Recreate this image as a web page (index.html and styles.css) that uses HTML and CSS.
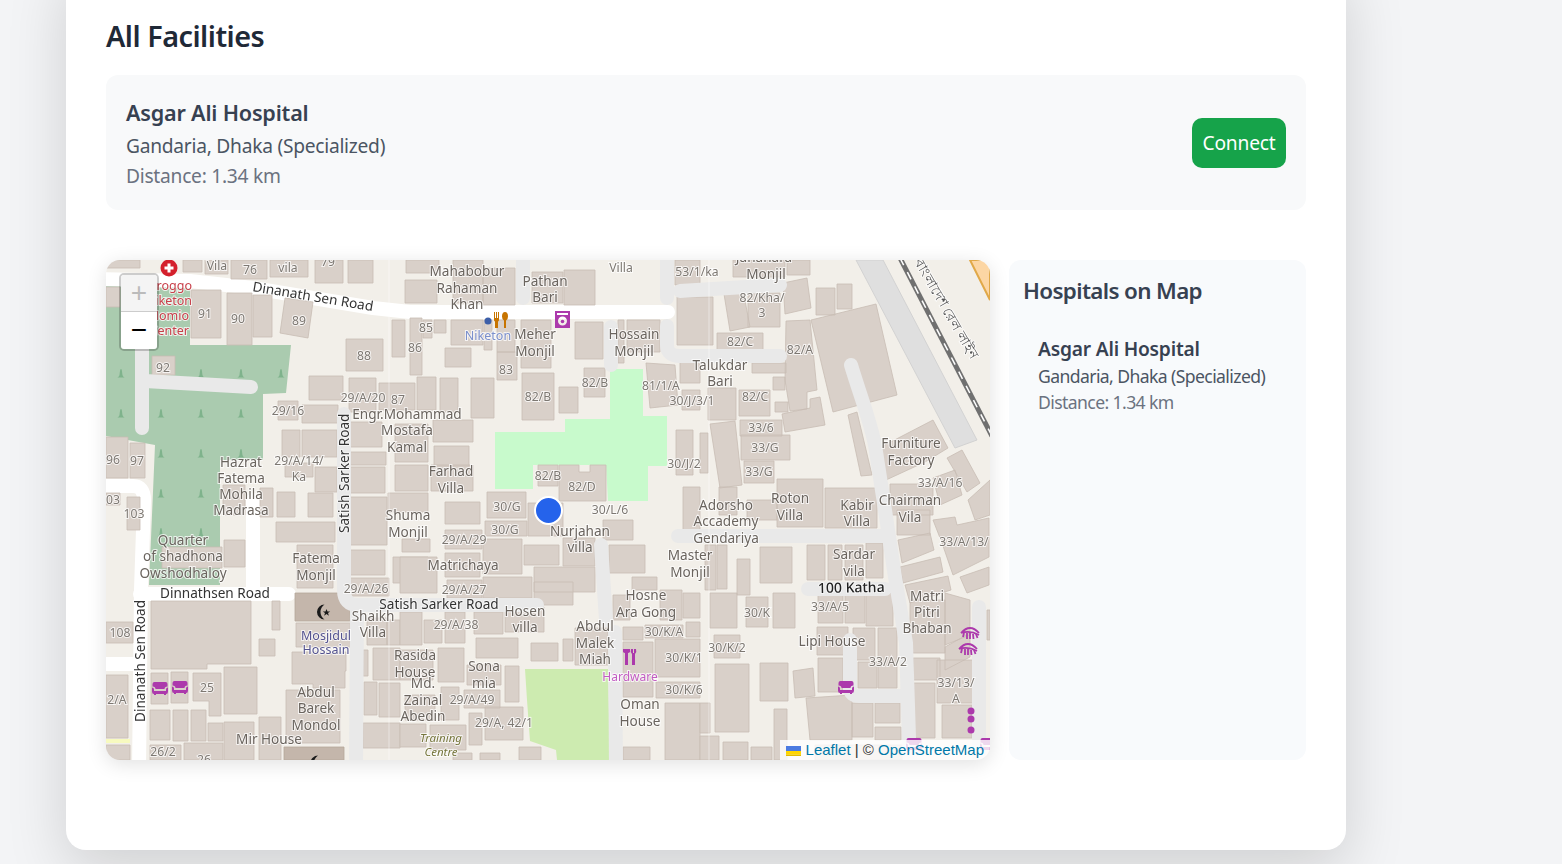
FILE: index.html
```html
<!DOCTYPE html>
<html lang="en">
<head>
  <meta charset="UTF-8" />
  <meta name="viewport" content="width=device-width, initial-scale=1" />
  <title>All Facilities</title>
  <link rel="stylesheet" href="styles.css">
</head>
<body>

  <main class="panel">
    <h2 class="panel-title">All Facilities</h2>

    <section class="facility">
      <div>
        <h3>Asgar Ali Hospital</h3>
        <p class="facility-area">Gandaria, Dhaka (Specialized)</p>
        <p class="facility-dist">Distance: 1.34 km</p>
      </div>
      <button class="connect" type="button">Connect</button>
    </section>

    <section class="map-row">
      <div class="map">
        <svg class="map-tiles" viewBox="106 260 884 500" aria-label="Street map">
          <defs>
            <path id="tree" d="M0 -6c1 0 1 3 1.500 6c.3 1.500 1.500 2 2 2.500h-7c.5 -.5 1.700 -1 2 -2.500c.5 -3 .5 -6 1.500 -6z" />
            <path id="sofa" d="M-5.500 -6h11q2 0 2 2v2.500q-3 0 -3 2.500h-9q0 -2.500 -3 -2.500v-2.500q0 -2 2 -2zM-8 -.500q2 0 2 2v1.500h12v-1.500q0 -2 2 -2v4q0 2.500 -2 2.500v1h-2v-1h-8v1h-2v-1q-2 0 -2 -2.500z" />
            <path id="crescent" d="M3 -7.500a7.500 7.500 0 1 0 0 15a9 9 0 0 1 0 -15zM5 -3l1 2.500h2.700l-2.200 1.600l.9 2.700l-2.400 -1.700l-2.400 1.700l.9 -2.700l-2.200 -1.600h2.700z" />
            <g id="lash">
              <path d="M-9 1Q0 -9 9 1M-9 1Q0 -2 9 3" class="lash-line" />
              <path d="M-6 1l-1 4M-3 1v6M0 1v6M3 2l.5 5M6 2l1.500 4" class="lash-line" />
            </g>
          </defs>

          <rect class="land" x="106" y="260" width="884" height="500" />

          <!-- landuse -->
          <path class="cemetery" d="M106 285H190V345H291L286 393 263 394V460H220V585H149L155 445 106 436Z" />
          <path class="pitch" d="M495 432H565V419H610V369H643V416H667V466H648V501H608L606 465H533V489H495Z" />
          <path class="grass" d="M525 669H608L610 760H557L556 750 530 741 527 700Z" />
          <path class="rail-yard" d="M856 260H883L977 440 955 448Z" />
          <path class="commercial" d="M970 260H990V300Z" />

          <!-- trees -->
          <g class="trees">
            <use href="#tree" x="121" y="375" /><use href="#tree" x="201" y="375" /><use href="#tree" x="241" y="375" /><use href="#tree" x="281" y="375" />
            <use href="#tree" x="121" y="415" /><use href="#tree" x="161" y="415" /><use href="#tree" x="201" y="415" /><use href="#tree" x="241" y="415" />
            <use href="#tree" x="161" y="455" /><use href="#tree" x="201" y="455" /><use href="#tree" x="241" y="455" />
            <use href="#tree" x="161" y="495" /><use href="#tree" x="201" y="495" />
            <use href="#tree" x="161" y="534" /><use href="#tree" x="201" y="534" />
          </g>

          <!-- white roads -->
          <g class="road-main">
            <path d="M100 279L190 281 253 288 373 308 410 312 668 312" />
            <path d="M100 486H133Q144 486 144 500L141 590 139 770M100 664H139M140 594H289M253 500V590" />
          </g>
          <path class="road-yellow" d="M106 741H130" />

          <!-- buildings, west -->
          <path class="bld" d="M107 260H140V268H107Z M183 260H202V272H183Z M205 260H228V274H205Z M231 260H267V279H231Z M270 260H308V277H270Z M315 260H343V283H315Z M348 260H373V283H348Z
            M106 287H120V307H106Z M191 290H221V338H191Z M227 293H252V345H227Z M253 295H272V337H253Z M285 298L313 302 308 338 280 333Z M346 339H383V371H346Z M392 320H405V357H392Z
            M152 356H175V375H152Z M309 376H343V400H309Z M349 378H376V412H349Z M379 383H415V410H379Z M278 401H298V420H278Z M302 405H338V423H302Z M282 430H300V457H282Z M302 430H337V457H302Z
            M350 422H382V447H350Z M350 452H386V465H350Z M350 467H385V493H350Z M285 463H313V477H285Z M315 467H337V492H315Z M308 493H333V517H308Z M350 497H387V545H350Z M106 437H128V478H106Z M130 443H145V478H130Z
            M106 493H120V505H106Z M127 497H140V530H127Z M223 485H245V515H223Z M260 488H273V517H260Z M277 492H295V517H277Z M162 547H222V568H162Z M224 540H245V567H224Z M276 522H335V542H276Z
            M297 545H333V588H297Z M350 550H385V575H350Z M350 578H389V596H350Z M393 557H428V583H393Z M151 601H251V664H207V669H151Z M272 601H280V630H272Z M259 639H275V656H259Z M296 623H350V647H296Z
            M292 652H346V671H345V688H313V684H292Z M286 690H340V743H286Z M259 717H281V760H259Z M224 722H254V760H224Z M224 667H257V714H224Z M193 673H221V716H209V701H193Z M151 673H168V704H151Z M171 672H188V703H171Z
            M150 710H170V740H150Z M173 710H188V741H173Z M191 710H206V741H191Z M208 723H223V741H208Z M150 745H181V760H150Z M184 743H223V760H184Z M106 622H133V643H106Z M106 675H128V738H106Z M106 745H130V760H106Z
            M363 650H368V676H363Z M373 648H400V680H373Z M364 682H377V715H364Z M379 683H400V717H379Z M363 723H400V748H363Z M367 618H387V645H367Z M387 620H400V645H387Z" />

          <!-- buildings, centre -->
          <path class="bld" d="M406 260H439V273H406Z M405 280H437V303H405Z M453 260H483V303H453Z M483 268H515V305H483Z M532 272H563V303H532Z M564 270H595V305H564Z
            M410 318H422V375H410Z M423 320H432V338H423Z M434 320H446V333H434Z M451 320H483V345H451Z M484 320H492V350H484Z M445 348H471V367H445Z M497 320H515V352H497Z M497 352H517V380H497Z
            M521 320H551V368H521Z M575 322H603V359H575Z M627 320H660V352H627Z M618 320H624V363H618Z M584 368H605V397H584Z M522 373H554V420H522Z M559 387H578V413H559Z M471 378H494V418H471Z M440 378H458V412H440Z
            M417 377H436V410H417Z M433 420H473V442H433Z M434 446H469V466H434Z M395 424H428V462H395Z M395 465H428V491H395Z M431 465H473V491H431Z M388 493H428V512H388Z M445 502H480V524H445Z M487 492H526V518H487Z
            M538 465H558V486H538Z M559 465H579V472H590V465H606V501H559Z M646 363L675 365 678 405 650 408Z M680 361H700V383H680Z M682 390H700V410H682Z M676 430H693V475H676Z M683 487H700V530H683Z
            M675 260H700V285H675Z M677 297H713V345H677Z M485 521H527V536H485Z M528 503H563V536H528Z M445 530H482V549H445Z M402 539H430V552H402Z M445 553H480V577H445Z M483 539H522V574H483Z M524 545H559V565H524Z
            M563 538H595V566H563Z M603 520H633V540H603Z M609 545H645V573H609Z M400 557H437V593H400Z M447 580H482V598H447Z M483 577H532V598H483Z M534 567H595V592H534Z M534 582H573V605H534Z M632 577H657V590H632Z
            M613 595H630V620H613Z M660 590H682V620H660Z M683 593H700V618H683Z M623 627H643V640H623Z M645 625H683V638H645Z M686 622H700V637H686Z M623 642H653V697H623Z M655 639H700V677H655Z M656 682H700V698H656Z
            M665 703H700V760H665Z M623 747H650V760H623Z M575 628H608V665H575Z M563 639H573V661H563Z M531 643H558V661H531Z M476 638H518V658H476Z M474 612H503V634H474Z M445 612H465V643H445Z M424 620H442V643H424Z
            M400 612H422V645H400Z M505 607H544V632H505Z M438 648H464V682H438Z M400 650H433V680H400Z M467 665H501V685H467Z M505 666H519V702H505Z M441 687H459V720H441Z M464 690H500V708H464Z M485 707H523V740H485Z
            M469 713H482V745H469Z M405 695H435V720H405Z M400 724H426V747H400Z M430 725H466V750H430Z M519 747H541V760H519Z M480 753H500V760H480Z M453 753H472V760H453Z" />

          <!-- buildings, east -->
          <path class="bld" d="M733 260H785V277H733Z M787 260H810V275H787Z M724 294L743 290 750 327 730 331Z M748 293H780V327H748Z M783 283L807 278 811 308 785 314Z M816 288H835V315H816Z M837 284H852V309H837Z
            M811 320L876 304 897 395 833 412Z M786 321L810 320 817 390 807 392V409L790 411 785 380Z M773 377H785V390H773Z M775 402H788V412H775Z M782 414L810 408V399L820 397 825 425 785 432Z
            M717 333H763V352H717Z M752 363H786V373H752Z M708 388H736V420H708Z M739 390H770V416H739Z M740 420H782V436H740Z M741 435H790V460H741Z M744 461H774V483H744Z M710 424L735 421 742 485 720 488Z
            M719 487H737V515H719Z M700 433H708V473H700Z M747 500H777V520H747Z M777 479H823V527H777Z M825 488H877V528H825Z M890 484H933V515H890Z M881 447L933 420 948 448 925 462 886 480Z
            M848 415L857 412 872 475 861 476Z M947 458L962 450 980 483 967 492Z M968 500L990 480V515L975 520Z M933 478L955 470 962 495 940 505Z M897 510H930V535H897Z M898 540L930 533 934 550 902 563Z M900 567L940 557 943 572 903 583Z
            M905 585L948 576 951 590 910 603Z M933 520L955 517 957 525 989 518V557L953 575 942 543Z M960 577L989 567V585L967 593Z M945 593L970 600V635L945 645Z M910 600H945V653H910Z M945 647L970 633V657L945 670Z
            M913 658H940V680H913Z M937 660H973V703H937Z M913 683H935V738H913Z M942 705H972V738H942Z M705 545H716V590H705Z M717 545H727V589H717Z M737 559H750V595H737Z M760 547H792V583H760Z M710 593H737V628H710Z
            M746 597H768V627H746Z M773 593H795V628H773Z M807 545H825V580H807Z M828 545H842V580H828Z M845 545H863V580H845Z M866 543H883V578H866Z M818 595H843V623H818Z M845 595H865V623H845Z M866 593H893V626H866Z
            M817 627H848V655H817Z M853 628H875V660H853Z M878 628H897V688H878Z M858 662H877V688H858Z M818 658H843V692H818Z M714 635H740V658H714Z M715 664H749V732H715Z M760 663H788V701H760Z M793 671L813 668 815 696 795 698Z
            M806 698L852 695V740H810Z M852 703H873V737H852Z M875 703H900V723H875Z M875 727H901V740H875Z M774 709H787V760H774Z M700 736H719V760H700Z M723 742H748V760H723Z M751 747H772V760H751Z M700 703H710V733H700Z M987 610H990V640H987Z M815 745H905V760H815Z" />

          <path class="bld-dark" d="M295 593H350V621H295Z M284 747H344V760H284Z" />

          <!-- grey service roads -->
          <g class="road-minor">
            <path d="M142 290V428M145 381L251 387" />
            <path d="M344 414V590Q344 605 358 605H537M357 605L356 770" />
            <path d="M523 250V298M611 327V365M667 250V298M667 326V345Q667 356 680 356H780M680 291L780 285" />
            <path d="M601 545L606 620M615 632L616 770" />
            <path d="M678 536H885M808 589H885M850 640V688Q850 696 860 696H900M979 607V770" />
            <path d="M851 365C860 395 870 420 875 445L885 510 895 577 906 643 910 770" />
          </g>

          <!-- railway -->
          <path class="rail" d="M900 258L992 436" />
          <path class="rail-dash" d="M900 258L992 436" />
          <path class="tile-seam" d="M389 260V760M709 260V760" />

          <!-- point icons -->
          <circle class="ico-hospital" cx="169" cy="268" r="8.500" />
          <path class="ico-plus" d="M167.500 263.500h3v3h3v3h-3v3h-3v-3h-3v-3h3z" />
          <circle class="ico-blue" cx="488" cy="321" r="3.500" />
          <path class="ico-food" d="M494 312h1v6h1v-6h1v6h1v-6h1v8q0 1 -1 1.500v6.500h-3v-6.500q-1 -.5 -1 -1.500zM505 312q3 0 3 4.500q0 3 -2 4v7.500h-2v-7.500q-2 -1 -2 -4q0 -4.500 3 -4.500z" />
          <path class="ico-purple" fill-rule="evenodd" d="M555 311h15v17h-15zM557 313v2h11v-2zM562.500 316.500a4.500 4.500 0 1 0 0 9a4.500 4.500 0 1 0 0 -9z" />
          <circle class="ico-washer" cx="562.500" cy="321.500" r="1.800" />
          <path class="ico-magenta" d="M623 649h7v3q-1 1 -2 1v12h-3v-12q-1 0 -2 -1zM631 649h2v4h1v-4h2q1 3 -1 5v11h-3v-11q-2 -2 -1 -5z" />
          <g class="ico-purple">
            <use href="#sofa" x="160" y="688" />
            <use href="#sofa" x="180" y="687" />
            <use href="#sofa" x="846" y="687" />
            <use href="#sofa" x="914" y="744" />
            <use href="#sofa" x="988" y="744" />
            <circle cx="971" cy="711" r="3.500" /><circle cx="971" cy="719" r="3.500" /><circle cx="971" cy="730" r="3.500" />
          </g>
          <use href="#lash" x="970" y="632" /><use href="#lash" x="968" y="648" />
          <g class="ico-black">
            <use href="#crescent" x="321.500" y="612" />
            <use href="#crescent" x="315" y="763" />
          </g>

          <!-- street names -->
          <g class="lbl-road">
            <text transform="translate(252 291) rotate(9.500)">Dinanath Sen Road</text>
            <text x="215" y="598" class="mid">Dinnathsen Road</text>
            <text x="439" y="609" class="mid">Satish Sarker Road</text>
            <text transform="translate(349 533) rotate(-90)">Satish Sarker Road</text>
            <text transform="translate(145 722) rotate(-90)">Dinanath Sen Road</text>
            <text transform="translate(818 593) rotate(-1)" class="lbl-katha">100 Katha</text>
          </g>

          <text class="lbl-rail" transform="translate(914 262) rotate(60)">বাংলাদেশ রেল লাইন</text>

          <!-- house numbers -->
          <g class="lbl-num">
            <text x="217" y="270">Vila</text><text x="250" y="274">76</text><text x="288" y="272">vila</text><text x="328" y="266">79</text>
            <text x="205" y="318">91</text><text x="238" y="323">90</text><text x="299" y="325">89</text><text x="163" y="372">92</text><text x="364" y="360">88</text>
            <text x="426" y="332">85</text><text x="415" y="352">86</text><text x="506" y="374">83</text><text x="595" y="387">82/B</text><text x="538" y="401">82/B</text>
            <text x="363" y="402">29/A/20</text><text x="398" y="404">87</text><text x="288" y="415">29/16</text><text x="113" y="464">96</text><text x="137" y="465">97</text>
            <text x="113" y="504">03</text><text x="134" y="518">103</text><text x="120" y="637">108</text><text x="207" y="692">25</text><text x="117" y="704">2/A</text><text x="163" y="756">26/2</text><text x="204" y="764">26</text>
            <text x="621" y="272">Villa</text><text x="697" y="276">53/1/ka</text><text x="762" y="302">82/Kha/</text><text x="762" y="317">3</text><text x="740" y="346">82/C</text><text x="800" y="354">82/A</text>
            <text x="661" y="390">81/1/A</text><text x="692" y="405">30/J/3/1</text><text x="755" y="401">82/C</text><text x="761" y="432">33/6</text><text x="765" y="452">33/G</text><text x="759" y="476">33/G</text>
            <text x="940" y="487">33/A/16</text><text x="299" y="465">29/A/14/</text><text x="299" y="481">Ka</text><text x="548" y="480">82/B</text><text x="582" y="491">82/D</text><text x="507" y="511">30/G</text>
            <text x="610" y="514">30/L/6</text><text x="684" y="468">30/J/2</text><text x="505" y="534">30/G</text><text x="464" y="544">29/A/29</text><text x="964" y="546">33/A/13/</text><text x="366" y="593">29/A/26</text>
            <text x="464" y="594">29/A/27</text><text x="830" y="611">33/A/5</text><text x="757" y="617">30/K</text><text x="456" y="629">29/A/38</text><text x="664" y="636">30/K/A</text><text x="684" y="662">30/K/1</text>
            <text x="727" y="652">30/K/2</text><text x="888" y="666">33/A/2</text><text x="472" y="704">29/A/49</text><text x="684" y="694">30/K/6</text><text x="504" y="727">29/A, 42/1</text><text x="956" y="687">33/13/</text><text x="956" y="703">A</text>
          </g>

          <!-- building names -->
          <g class="lbl">
            <text x="467" y="276">Mahabobur</text><text x="467" y="293">Rahaman</text><text x="467" y="309">Khan</text><text x="545" y="286">Pathan</text><text x="545" y="302">Bari</text>
            <text x="764" y="262">Jahanara</text><text x="766" y="279">Monjil</text><text x="535" y="339">Meher</text><text x="535" y="356">Monjil</text><text x="634" y="339">Hossain</text><text x="634" y="356">Monjil</text>
            <text x="720" y="370">Talukdar</text><text x="720" y="386">Bari</text><text x="911" y="448">Furniture</text><text x="911" y="465">Factory</text><text x="407" y="419">Engr.Mohammad</text><text x="407" y="435">Mostafa</text><text x="407" y="452">Kamal</text>
            <text x="241" y="467">Hazrat</text><text x="241" y="483">Fatema</text><text x="241" y="499">Mohila</text><text x="241" y="515">Madrasa</text><text x="451" y="476">Farhad</text><text x="451" y="493">Villa</text>
            <text x="726" y="510">Adorsho</text><text x="726" y="526">Accademy</text><text x="726" y="543">Gendariya</text><text x="790" y="503">Roton</text><text x="790" y="520">Villa</text><text x="857" y="510">Kabir</text><text x="857" y="526">Villa</text>
            <text x="910" y="505">Chairman</text><text x="910" y="522">Vila</text><text x="408" y="520">Shuma</text><text x="408" y="537">Monjil</text><text x="580" y="536">Nurjahan</text><text x="580" y="552">villa</text>
            <text x="183" y="545">Quarter</text><text x="183" y="561">of shadhona</text><text x="183" y="578">Owshodhaloy</text><text x="316" y="563">Fatema</text><text x="316" y="580">Monjil</text><text x="463" y="570">Matrichaya</text>
            <text x="690" y="560">Master</text><text x="690" y="577">Monjil</text><text x="854" y="559">Sardar</text><text x="854" y="576">vila</text><text x="525" y="616">Hosen</text><text x="525" y="632">villa</text>
            <text x="646" y="600">Hosne</text><text x="646" y="617">Ara Gong</text><text x="927" y="601">Matri</text><text x="927" y="617">Pitri</text><text x="927" y="633">Bhaban</text><text x="373" y="621">Shaikh</text><text x="373" y="637">Villa</text>
            <text x="595" y="631">Abdul</text><text x="595" y="648">Malek</text><text x="595" y="664">Miah</text><text x="832" y="646">Lipi House</text><text x="415" y="660">Rasida</text><text x="415" y="677">House</text><text x="423" y="688">Md.</text>
            <text x="423" y="705">Zainal</text><text x="423" y="721">Abedin</text><text x="484" y="671">Sona</text><text x="484" y="688">mia</text><text x="640" y="709">Oman</text><text x="640" y="726">House</text>
            <text x="316" y="697">Abdul</text><text x="316" y="713">Barek</text><text x="316" y="730">Mondol</text><text x="269" y="744">Mir House</text>
          </g>

          <g class="lbl-blue"><text x="488" y="340">Niketon</text></g>
          <g class="lbl-navy"><text x="326" y="640">Mosjidul</text><text x="326" y="654">Hossain</text></g>
          <g class="lbl-shop"><text x="630" y="681">Hardware</text></g>
          <g class="lbl-school"><text x="441" y="742">Training</text><text x="441" y="756">Centre</text></g>
          <g class="lbl-health"><text x="192" y="290">Aroggo</text><text x="192" y="305">Niketon</text><text x="189" y="320">Homio</text><text x="189" y="335">Center</text></g>
        </svg>

        <span class="map-pin"></span>

        <div class="zoom-ctl">
          <a class="zoom-btn zoom-off" href="#">+</a>
          <a class="zoom-btn" href="#">&minus;</a>
        </div>

        <div class="attrib">
          <svg class="attrib-flag" viewBox="0 0 12 8" aria-hidden="true"><path fill="#4c7be1" d="M0 0h12v4H0z" /><path fill="#ffd500" d="M0 4h12v3H0z" /><path fill="#e0bc00" d="M0 7h12v1H0z" /></svg>
          <a href="#">Leaflet</a> | &copy; <a href="#">OpenStreetMap</a>
        </div>
      </div>

      <aside class="map-side">
        <h3 class="side-title">Hospitals on Map</h3>
        <div class="side-item">
          <h4>Asgar Ali Hospital</h4>
          <p class="side-area">Gandaria, Dhaka (Specialized)</p>
          <p class="side-dist">Distance: 1.34 km</p>
        </div>
      </aside>
    </section>
  </main>

</body>
</html>
```
FILE: styles.css
```css
/* Reset & Base */
* { box-sizing: border-box; margin: 0; padding: 0; }
body {
  font-family: 'Noto Sans', 'Open Sans', sans-serif;
  background: #f3f4f6;
  color: #1f2937;
  height: 100vh;
  overflow: hidden;
}

/* Main panel (page is scrolled, so its top is off screen) */
.panel {
  width: 1280px;
  height: 890px;
  margin: -40px 0 0 66px;
  padding: 55px 40px 0;
  background: #fff;
  border-radius: 20px;
  box-shadow: 0 20px 60px rgba(0, 0, 0, 0.15);
}
.panel-title {
  font-size: 28.8px;
  font-weight: 600;
  line-height: 42px;
  letter-spacing: -0.5px;
  color: #1f2937;
  margin-bottom: 18px;
}

/* Facility row */
.facility {
  height: 135px;
  padding: 4px 20px 0;
  background: #f8f9fa;
  border-radius: 12px;
  display: flex;
  align-items: center;
  justify-content: space-between;
}
.facility h3 {
  font-size: 21.6px;
  font-weight: 600;
  line-height: 30px;
  letter-spacing: -0.2px;
  color: #374151;
  margin-bottom: 3px;
}
.facility-area, .facility-dist {
  font-size: 19.2px;
  line-height: 30px;
  letter-spacing: -0.26px;
}
.facility-area { color: #4b5563; }
.facility-dist { color: #6b7280; }
.connect {
  width: 94px;
  height: 50px;
  margin-top: -4px;
  border: none;
  border-radius: 10px;
  background: #16a34a;
  color: #fff;
  font-family: inherit;
  font-size: 19.2px;
  letter-spacing: -0.2px;
}

/* Map + side list */
.map-row {
  display: grid;
  grid-template-columns: 884px 297px;
  gap: 19px;
  height: 500px;
  margin-top: 50px;
}
.map {
  position: relative;
  overflow: hidden;
  border-radius: 14px;
  box-shadow: 0 4px 20px rgba(0, 0, 0, 0.12);
}
.map-tiles {
  display: block;
  width: 884px;
  height: 500px;
  filter: blur(0.45px);
  font-family: 'Noto Sans', sans-serif;
}

/* Map fills */
.land { fill: #f2efe9; }
.cemetery { fill: #aacbaf; }
.pitch { fill: #c8facc; }
.grass { fill: #cdebb0; }
.rail-yard { fill: #dfdfdf; stroke: #d2d2d2; }
.commercial { fill: #fcd6a4; stroke: #e0a848; stroke-width: 2; }
.trees { fill: #7fb38c; }
.bld { fill: #d9d0c9; stroke: #c8bdb4; stroke-width: 0.8; }
.bld-dark { fill: #c4b6ab; stroke: #b5a79a; stroke-width: 0.8; }
.road-minor path, .road-main path {
  fill: none;
  stroke-linecap: round;
  stroke-linejoin: round;
  stroke-width: 14px;
}
.road-minor path { stroke: #e9e9e9; }
.road-main path { stroke: #fff; }
.road-yellow { fill: none; stroke: #f7fabf; stroke-width: 4; }
.rail { fill: none; stroke: #707070; stroke-width: 5; }
.rail-dash { fill: none; stroke: #fff; stroke-width: 1.5; stroke-dasharray: 8 8; }
.tile-seam { stroke: #fff; stroke-opacity: 0.45; stroke-width: 1; }

/* Map icons */
.ico-hospital { fill: #d4202c; }
.ico-plus { fill: #fff; }
.ico-blue { fill: #3d5fa8; }
.ico-food { fill: #c77400; }
.ico-purple { fill: #ac39ac; }
.ico-washer { fill: #ac39ac; }
.ico-magenta { fill: #ac39ac; }
.ico-black { fill: #1a1a1a; }
.lash-line { fill: none; stroke: #ac39ac; stroke-width: 1.8; }

/* Map labels */
.lbl text, .lbl-num text, .lbl-blue text, .lbl-navy text, .lbl-shop text, .lbl-school text, .lbl-road text, .lbl-health text, .lbl-rail {
  paint-order: stroke;
  stroke: rgba(255, 255, 255, 0.75);
  stroke-width: 2px;
}
.lbl text { font-size: 13.6px; fill: #6a645e; text-anchor: middle; }
.lbl-num text { font-size: 12.2px; fill: #7d7872; text-anchor: middle; }
.lbl-road text { font-size: 13.6px; fill: #333; stroke: rgba(255, 255, 255, 0.6); }
.lbl-road text.mid { text-anchor: middle; }
.lbl-road text.lbl-katha { font-size: 14px; font-weight: 500; fill: #222; }
.lbl-rail { font-size: 13.5px; fill: #555; }
.lbl-blue text { font-size: 12.5px; fill: #7b90cc; text-anchor: middle; }
.lbl-navy text { font-size: 12.5px; fill: #53528f; text-anchor: middle; }
.lbl-shop text { font-size: 12px; fill: #c25cc2; text-anchor: middle; }
.lbl-school text { font-size: 11.5px; font-style: italic; fill: #76763c; text-anchor: middle; }
.lbl-health text { font-size: 12.5px; fill: #c8404a; text-anchor: end; }

/* Marker over map */
.map-pin {
  position: absolute;
  left: 428px;
  top: 236px;
  width: 29px;
  height: 29px;
  border-radius: 50%;
  background: #2563eb;
  border: 2.5px solid #fff;
}

/* Leaflet style controls */
.zoom-ctl {
  position: absolute;
  left: 13px;
  top: 13px;
  width: 40px;
  border: 2px solid rgba(0, 0, 0, 0.2);
  border-radius: 5px;
  background-clip: padding-box;
}
.zoom-btn {
  display: block;
  height: 37px;
  background: #fff;
  color: #000;
  text-align: center;
  text-decoration: none;
  font: 400 28px/36px 'Liberation Sans', Arial, sans-serif;
}
.zoom-btn:first-child { border-radius: 3px 3px 0 0; }
.zoom-btn:last-child { border-radius: 0 0 3px 3px; }
.zoom-off {
  background: #f4f4f4;
  color: #bbb;
  border-bottom: 1px solid #ccc;
}
.attrib {
  position: absolute;
  right: 0;
  bottom: 0;
  height: 20px;
  padding: 0 6px;
  background: rgba(255, 255, 255, 0.8);
  color: #333;
  font: 15px/20px 'Liberation Sans', Arial, sans-serif;
  white-space: nowrap;
}
.attrib a { color: #0078a8; text-decoration: none; }
.attrib-flag { width: 15px; height: 10px; vertical-align: -1px; }

/* Side list */
.map-side {
  background: #f8fafc;
  border-radius: 12px;
  padding: 14px 14px;
}
.side-title {
  font-size: 22.4px;
  font-weight: 600;
  line-height: 34px;
  letter-spacing: -0.65px;
  color: #374151;
  margin-bottom: 27px;
}
.side-item { padding-left: 15px; }
.side-item h4 {
  font-size: 19.2px;
  font-weight: 600;
  line-height: 28px;
  letter-spacing: -0.2px;
  color: #374151;
}
.side-area, .side-dist {
  font-size: 17.6px;
  line-height: 26px;
  letter-spacing: -0.6px;
}
.side-area { color: #4b5563; }
.side-dist { color: #6b7280; }
```
